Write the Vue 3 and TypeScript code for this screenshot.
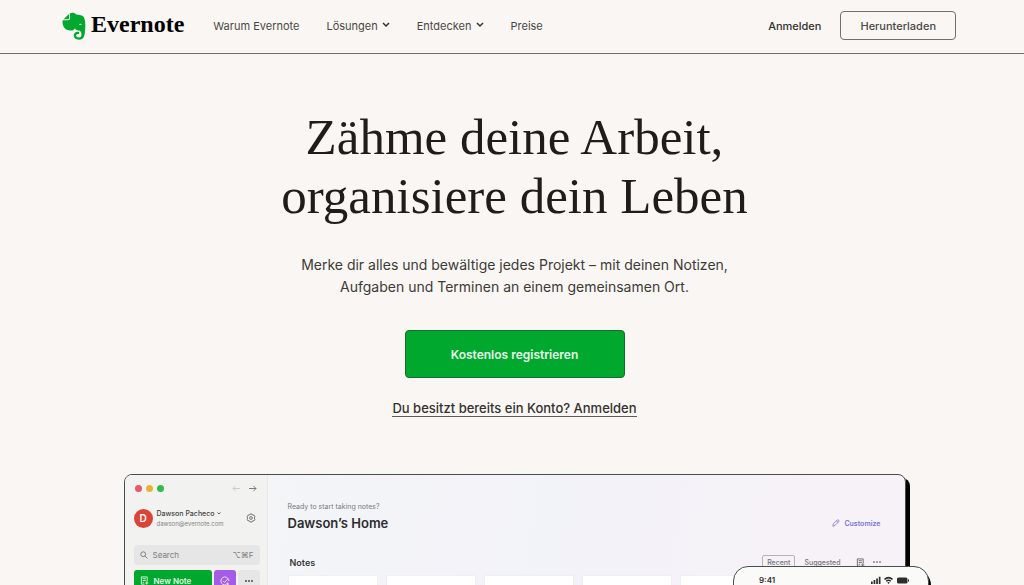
<script setup lang="ts">
interface NavItem {
  label: string
  menu: boolean
}

const navItems: NavItem[] = [
  { label: 'Warum Evernote', menu: false },
  { label: 'Lösungen', menu: true },
  { label: 'Entdecken', menu: true },
  { label: 'Preise', menu: false },
]

const noteCards: number[] = [1, 2, 3, 4, 5, 6]
</script>

<template>
  <div class="page">
    <header class="header">
      <a class="brand" href="#" aria-label="Evernote">
        <svg class="elephant" viewBox="0 0 24 28" aria-hidden="true">
          <path d="M1.600 7.200 7 1.900V5.900Q7 7.200 5.700 7.200Z" fill="#00a82d" />
          <path d="M7.900 1.300C9.500.4 12.700.3 14.200 2.400c2.700.3 5.200.5 6.600 1.500 1.600 1.100 2.500 4.400 2.500 9.200 0 5.500-.5 9.700-1.500 12-.8 1.700-2.400 2.600-4.800 2.600-3.300 0-5.200-1.700-5.200-4.100 0-2.300 1.600-3.800 3.800-3.800h1.500v2.300h-1.200c-1.100 0-1.800.6-1.800 1.500 0 1.200 1.100 1.900 2.700 1.900 2 0 2.700-1.300 2.700-3.100 0-2.400-1-3.800-3-4-1.700-.2-3.100-.8-3.600-2.200-.7 1.700-2.100 2.500-4.400 2.300C3 18.200.5 14.200.5 9.900c0-.6.1-1.100.3-1.600h5.100c1.500 0 2.200-.8 2.200-2.200Z" fill="#00a82d" />
          <path d="M17 12.700c.2-1.500 2.600-1.500 2.800.5-.9-.4-1.800-.5-2.800-.5Z" fill="#d9f2dc" />
        </svg>
        <span class="wordmark">Evernote</span>
      </a>
      <nav class="nav">
        <a v-for="item in navItems" :key="item.label" href="#" class="nav-link">
          {{ item.label }}
          <svg v-if="item.menu" class="chevron" viewBox="0 0 8 6" aria-hidden="true">
            <path d="m1 1 3 3 3-3" />
          </svg>
        </a>
      </nav>
      <a class="login" href="#">Anmelden</a>
      <button class="download" type="button">Herunterladen</button>
    </header>

    <main class="hero">
      <h1>Zähme deine Arbeit,<br />organisiere dein Leben</h1>
      <p class="lead">
        Merke dir alles und bewältige jedes Projekt – mit deinen Notizen,<br />
        Aufgaben und Terminen an einem gemeinsamen Ort.
      </p>
      <button class="signup" type="button">Kostenlos registrieren</button>
      <a class="existing" href="#">Du besitzt bereits ein Konto? Anmelden</a>

      <section class="preview">
        <div class="window">
          <aside class="sidebar">
            <div class="window-bar">
              <i class="light red"></i><i class="light amber"></i><i class="light green"></i>
              <svg class="arrow faded" viewBox="0 0 10 8" aria-hidden="true"><path d="M9 4H1m3-3L1 4l3 3" /></svg>
              <svg class="arrow" viewBox="0 0 10 8" aria-hidden="true"><path d="M1 4h8M6 1l3 3-3 3" /></svg>
            </div>
            <div class="account">
              <span class="avatar">D</span>
              <div class="identity">
                <span class="name">Dawson Pacheco
                  <svg class="tiny-chevron" viewBox="0 0 8 6" aria-hidden="true"><path d="m1 1 3 3 3-3" /></svg>
                </span>
                <span class="mail">dawson@evernote.com</span>
              </div>
              <svg class="gear" viewBox="0 0 10 10" aria-hidden="true">
                <path d="M4 1h2l.6 1.200 1.400-.1 1 1.700-.8 1.200.8 1.200-1 1.700-1.400-.1L6 9H4l-.6-1.200-1.400.1-1-1.700L1.800 5 1 3.800l1-1.700 1.400.1Z" />
                <circle cx="5" cy="5" r="1.400" />
              </svg>
            </div>
            <label class="search">
              <svg class="lens" viewBox="0 0 10 10" aria-hidden="true"><circle cx="4" cy="4" r="3" /><path d="m6.300 6.300 3 3" /></svg>
              <input type="text" placeholder="Search" aria-label="Search" />
              <span>⌥⌘F</span>
            </label>
            <div class="create">
              <button class="new-note" type="button">
                <svg class="note-icon" viewBox="0 0 10 10" aria-hidden="true"><path d="M5 9H1.500V1h6.500v5M3 3h3.500M3 5h3.500M3 7h1.500M7.500 6v3.500M5.800 7.800h3.500" /></svg>
                New Note
              </button>
              <button class="new-task" type="button" aria-label="New task">
                <svg viewBox="0 0 10 10" aria-hidden="true"><path d="M6 8.800A4 4 0 1 1 8.900 5M3 4.800l1.600 1.600L7.700 3M7.600 6.500v3M6.100 8h3" /></svg>
              </button>
              <button class="more" type="button" aria-label="More"><i></i><i></i><i></i></button>
            </div>
          </aside>

          <div class="home">
            <p class="prompt">Ready to start taking notes?</p>
            <div class="title-row">
              <h2>Dawson’s Home</h2>
              <button class="customize" type="button">
                <svg viewBox="0 0 10 10" aria-hidden="true"><path d="M1 9l.7-3L6.500 1.200q1-.7 1.800.2t.1 1.800L3.700 8.200ZM5.600 2.300l2 2" /></svg>
                Customize
              </button>
            </div>
            <div class="notes-row">
              <h3>Notes</h3>
              <button class="tab selected" type="button">Recent</button>
              <button class="tab" type="button">Suggested</button>
              <svg class="note-icon grey" viewBox="0 0 10 10" aria-hidden="true"><path d="M5 9H1.500V1h6.500v5M3 3h3.500M3 5h3.500M3 7h1.500M7.500 6v3.500M5.800 7.800h3.500" /></svg>
              <span class="dots"><i></i><i></i><i></i></span>
            </div>
            <div class="cards">
              <article v-for="card in noteCards" :key="card" class="card"></article>
            </div>
          </div>
        </div>

        <div class="phone">
          <span class="time">9:41</span>
          <svg class="status" viewBox="0 0 38 8" aria-hidden="true">
            <path d="M0 5.500h1.700V8H0zM2.600 4h1.700v4H2.600zM5.200 2.500h1.700V8H5.200zM7.800.7h1.700V8H7.800z" />
            <path d="M13 2.800q4.500-4 9 0l-1 1.100q-3.500-3-7 0ZM14.700 4.700q2.800-2.400 5.600 0l-1 1q-1.800-1.500-3.600 0ZM16.200 6.500q1.300-1 2.600 0L17.500 8Z" />
            <rect x="26" y="1.500" width="10.500" height="6" rx="1.500" />
            <path d="M37 3.500h1v2h-1z" />
          </svg>
        </div>
      </section>
    </main>
  </div>
</template>

<style>
body {
  background: #f9f6f3;
}
</style>

<style scoped>
* {
  box-sizing: border-box;
}

.page {
  height: 100vh;
  overflow: hidden;
  background: #f9f6f3;
  color: #33312e;
  font-family: Inter, "Liberation Sans", sans-serif;
}

a {
  color: inherit;
  text-decoration: none;
}

button {
  margin: 0;
  font-family: inherit;
  cursor: pointer;
}

svg {
  flex: none;
  overflow: visible;
}

h1, h2, h3, p {
  margin: 0;
}

.header {
  display: flex;
  align-items: center;
  height: 54px;
  padding: 0 68px 2px 62px;
  border-bottom: 1px solid #73706b;
}

.brand {
  display: flex;
  align-items: center;
  gap: 5px;
  margin-right: 29px;
}

.elephant {
  width: 24px;
  height: 28px;
}

.wordmark {
  padding-bottom: 4px;
  color: #000;
  font: 700 24px/24px "Liberation Serif", serif;
}

.nav {
  display: flex;
  flex: 1;
  gap: 27px;
}

.nav-link {
  display: flex;
  align-items: center;
  gap: 4px;
  font-size: 11px;
  color: #4a4844;
}

.chevron {
  width: 8px;
  height: 6px;
  margin-bottom: 2px;
}

.chevron path,
.tiny-chevron path {
  fill: none;
  stroke: #33312e;
  stroke-width: 1.5;
}

.login {
  margin-right: 19px;
  font-size: 11px;
  font-weight: 500;
  color: #33312e;
}

.download {
  height: 29px;
  padding: 0 19px;
  border: 1px solid #73706b;
  border-radius: 4px;
  background: transparent;
  font-size: 11px;
  font-weight: 500;
  color: #4a4844;
}

.hero {
  display: flex;
  flex-direction: column;
  align-items: center;
  padding: 54px 0 0 5px;
  text-align: center;
}

h1 {
  color: #1e1d1a;
  font: 400 51px/59px "Liberation Serif", serif;
}

.lead {
  margin-top: 28px;
  font-size: 14px;
  line-height: 22px;
  color: #3d3b37;
}

.signup {
  width: 220px;
  height: 48px;
  margin-top: 32px;
  border: 1px solid #176b2d;
  border-radius: 4px;
  background: #00a82d;
  color: #e6f8e9;
  font-size: 12px;
  font-weight: 600;
}

.existing {
  margin-top: 23px;
  border-bottom: 1px solid #5c5a55;
  font-size: 13px;
  font-weight: 500;
  line-height: 15px;
}

.preview {
  position: relative;
  width: 100%;
  max-width: 782px;
  margin-top: 57px;
  text-align: left;
}

.window {
  display: grid;
  grid-template-columns: 143px 1fr;
  height: 440px;
  overflow: hidden;
  border: 1px solid #4b4b4a;
  border-radius: 8px;
  background: linear-gradient(100deg, #f4f5f7 15%, #f2f2f9 50%, #f6f2f7 80%);
  box-shadow: 4px 4px 0 #000;
}

.sidebar {
  padding: 9px 7px 0 9px;
  border-right: 1px solid #e8e8e8;
  background: #f2f2f1;
}

.window-bar {
  display: flex;
  align-items: center;
  gap: 4px;
  height: 8px;
  padding: 0 3px 0 1px;
}

.light {
  width: 7px;
  height: 7px;
  border-radius: 50%;
}

.red {
  background: #e8586a;
}

.amber {
  background: #e9b13c;
}

.green {
  background: #35b84c;
}

.arrow {
  width: 9px;
  height: 7px;
  margin-left: 3px;
  fill: none;
  stroke: #6c6c6c;
}

.faded {
  margin-left: auto;
  stroke: #c6c6c6;
}

.account {
  display: flex;
  align-items: center;
  gap: 4px;
  height: 20px;
  margin-top: 16px;
  padding-right: 4px;
}

.avatar {
  width: 19px;
  height: 19px;
  border-radius: 50%;
  background: #dc4438;
  color: #fff;
  font-size: 10px;
  font-weight: 600;
  line-height: 19px;
  text-align: center;
}

.identity {
  display: flex;
  flex: 1;
  flex-direction: column;
  white-space: nowrap;
}

.name {
  font-size: 7px;
  font-weight: 500;
  line-height: 10px;
  color: #424242;
}

.tiny-chevron {
  width: 4px;
  height: 3px;
  margin: 0 0 1px 1px;
}

.mail {
  font-size: 6px;
  line-height: 9px;
  color: #858585;
}

.gear {
  width: 10px;
  height: 10px;
  fill: none;
  stroke: #6c6c6c;
  stroke-width: 0.9;
}

.search {
  display: flex;
  align-items: center;
  gap: 5px;
  height: 20px;
  margin-top: 17px;
  padding: 0 6px;
  border-radius: 3px;
  background: #e6e6e6;
  color: #7d7d7d;
  font-size: 8px;
}

.search input {
  flex: 1;
  min-width: 0;
  padding: 0;
  border: 0;
  outline: 0;
  background: transparent;
  font: inherit;
}

.search input::placeholder {
  color: #7d7d7d;
}

.lens {
  width: 8px;
  height: 8px;
  fill: none;
  stroke: #686868;
}

.create {
  display: grid;
  grid-template-columns: 1fr 22px 22px;
  gap: 2px;
  height: 21px;
  margin-top: 5px;
}

.create button {
  display: flex;
  align-items: center;
  justify-content: center;
  padding: 0;
  border: 0;
  border-radius: 3px;
}

.create .new-note {
  justify-content: flex-start;
  gap: 5px;
  padding-left: 6px;
  background: #00a82d;
  color: #e6f8e9;
  font-size: 8px;
  font-weight: 600;
}

.note-icon {
  width: 9px;
  height: 9px;
  fill: none;
  stroke: currentColor;
}

.grey {
  color: #666;
}

.create .new-task {
  background: #a45be8;
}

.new-task svg {
  width: 10px;
  height: 10px;
  fill: none;
  stroke: #efe2fb;
}

.create .more {
  gap: 1px;
  background: #e6e6e6;
}

.more i,
.dots i {
  width: 2px;
  height: 2px;
  border-radius: 50%;
  background: #4d4d4d;
}

.home {
  min-width: 0;
  padding: 27px 24px 0 20px;
}

.prompt {
  font-size: 7px;
  line-height: 10px;
  color: #7a7a7d;
}

.title-row,
.notes-row {
  display: flex;
  align-items: center;
  justify-content: space-between;
}

.title-row {
  height: 22px;
}

h2 {
  font-size: 13px;
  font-weight: 600;
  line-height: 18px;
  color: #2d2d30;
}

.customize {
  display: flex;
  align-items: center;
  gap: 4px;
  padding: 0;
  border: 0;
  background: transparent;
  color: #7a72dc;
  font-size: 7px;
  font-weight: 600;
}

.customize svg {
  width: 8px;
  height: 8px;
  fill: none;
  stroke: currentColor;
}

.notes-row {
  gap: 4px;
  height: 14px;
  margin-top: 21px;
}

h3 {
  margin-right: auto;
  padding-left: 2px;
  font-size: 9px;
  font-weight: 600;
  color: #38383b;
}

.tab {
  height: 14px;
  padding: 0 4px;
  border: 1px solid transparent;
  border-radius: 2px;
  background: transparent;
  color: #77757a;
  font-size: 7px;
  font-weight: 500;
}

.selected {
  border-color: #b6b3b8;
}

.notes-row .grey {
  margin-left: 6px;
}

.dots {
  display: flex;
  gap: 1px;
  margin-left: 4px;
}

.dots i {
  background: #8a888c;
}

.cards {
  display: flex;
  gap: 8px;
  margin-top: 6px;
  overflow: hidden;
}

.card {
  flex: 0 0 90px;
  height: 110px;
  border: 1px solid #f0f0f2;
  background: #fff;
}

.phone {
  position: absolute;
  top: 92px;
  right: -23px;
  display: flex;
  justify-content: space-between;
  width: 25%;
  height: 380px;
  padding: 8px 19px 0 25px;
  border: 1px solid #4b4b4a;
  border-radius: 15px;
  background: #fafaf9;
  box-shadow: 2px 4px 0 #000;
}

.time {
  font-size: 8px;
  font-weight: 600;
  line-height: 10px;
}

.status {
  width: 38px;
  height: 8px;
  margin-top: 1px;
  fill: #2d2d2d;
}
</style>
